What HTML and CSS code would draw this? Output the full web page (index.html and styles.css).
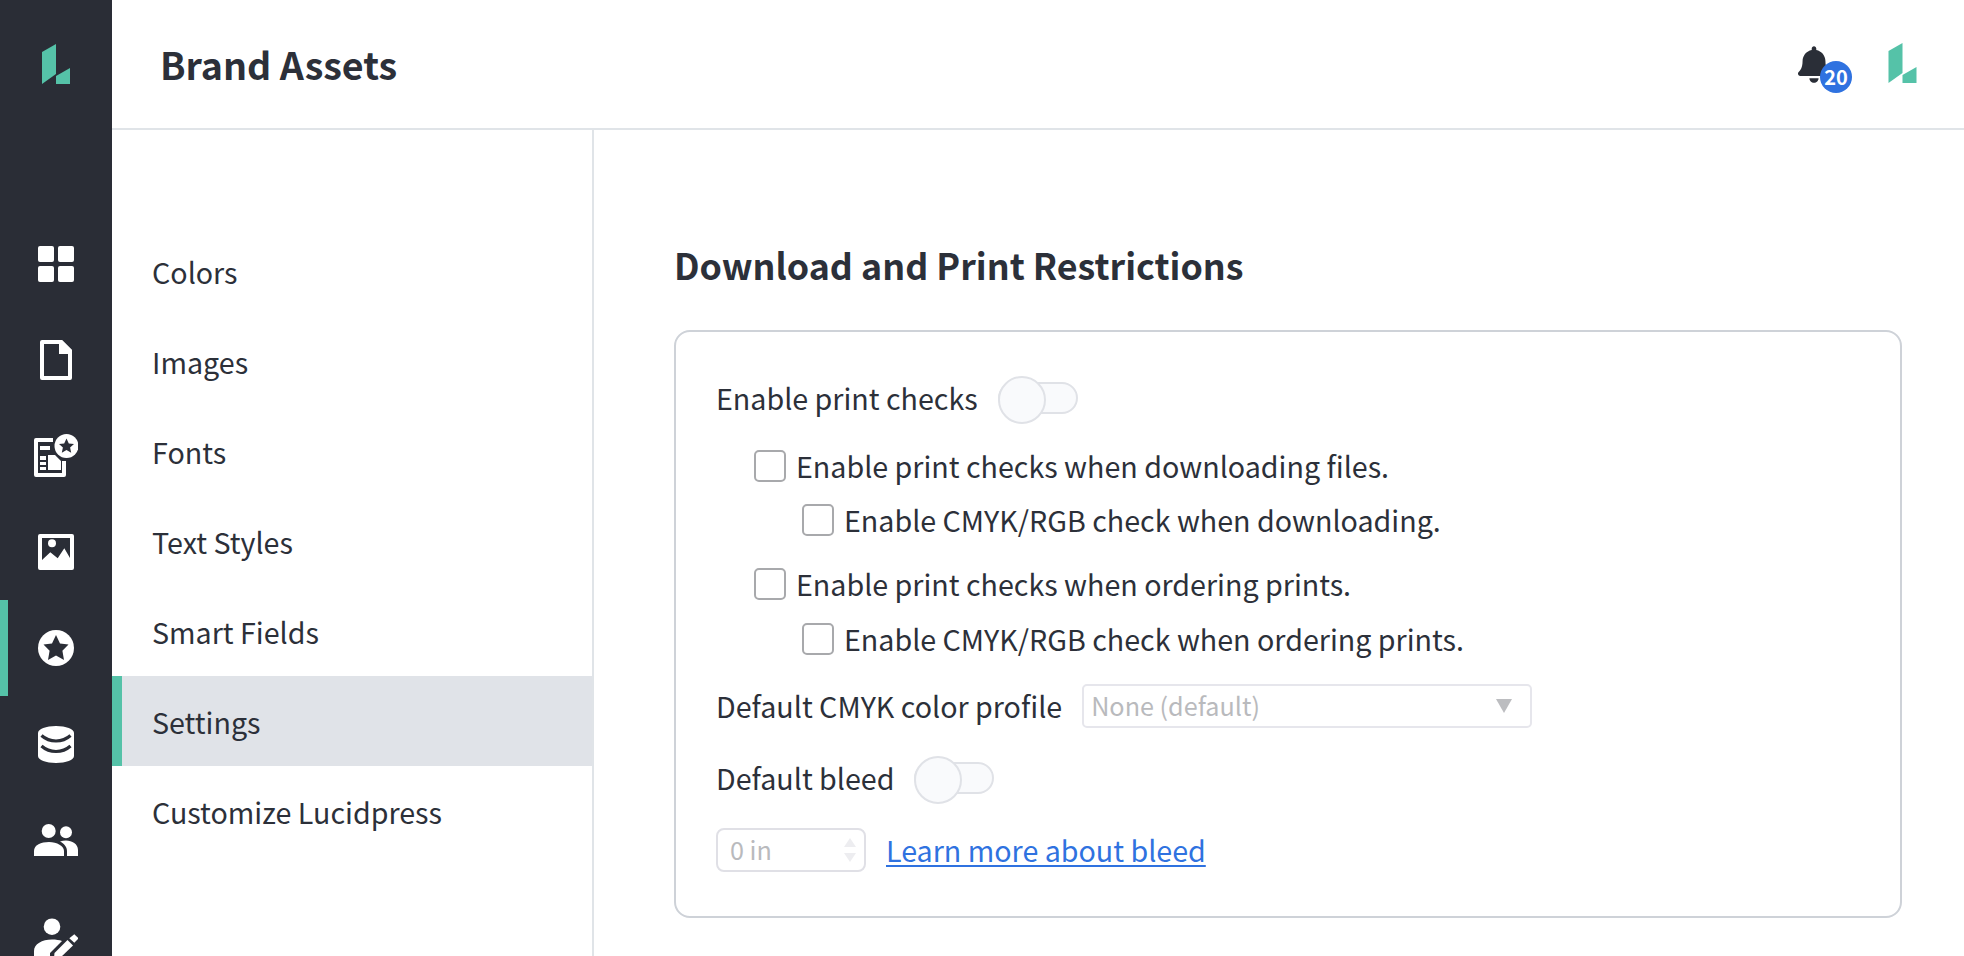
FILE: index.html
```html
<!DOCTYPE html>
<html lang="en">
<head>
<meta charset="utf-8">
<title>Brand Assets</title>
<link rel="stylesheet" href="styles.css">
</head>
<body>
<div class="app">
  <aside class="rail">
    <div class="rail-logo">
      <svg width="28" height="40" viewBox="0 0 28 40"><path class="logo" d="M0 8 14 0V30L0 40Z"/><path class="logo" d="M14 32 28 24V40H14Z"/></svg>
    </div>
    <nav class="rail-items">
      <div class="rail-item">
        <svg width="44" height="44" viewBox="0 0 44 44"><g class="w"><rect x="4" y="4" width="16" height="16" rx="2"/><rect x="24" y="4" width="16" height="16" rx="2"/><rect x="4" y="24" width="16" height="16" rx="2"/><rect x="24" y="24" width="16" height="16" rx="2"/></g></svg>
      </div>
      <div class="rail-item">
        <svg width="44" height="44" viewBox="0 0 44 44"><path class="wo" d="M8 4H27L36 13V40H8Z"/><path class="w" d="M25 2H28L38 12V16H25Z"/></svg>
      </div>
      <div class="rail-item">
        <svg width="44" height="44" viewBox="0 0 44 44"><path class="wo" d="M19 6H2V41H30V27"/><path class="w" d="M6 12H16V16H6ZM6 22H12V26H6ZM6 28H12V31H6ZM6 33H12V36H6ZM14 21H21L27 27V36H14Z"/><circle class="w" cx="32.500" cy="12" r="12"/><path class="d" d="M32.500 4.500 34.800 9.400 40 10 36.100 13.500 37.200 18.700 32.500 16 27.800 18.700 28.900 13.500 25 10 30.200 9.400Z"/></svg>
      </div>
      <div class="rail-item">
        <svg width="44" height="44" viewBox="0 0 44 44"><path class="w" fill-rule="evenodd" d="M6 4H38Q40 4 40 6V38Q40 40 38 40H6Q4 40 4 38V6Q4 4 6 4ZM8 8V30L16.300 22.300 23.700 28.300 30.300 18.300 36 28V8Z"/><circle class="w" cx="18" cy="13.300" r="4"/></svg>
      </div>
      <div class="rail-item active">
        <svg width="44" height="44" viewBox="0 0 44 44"><circle class="w" cx="22" cy="22" r="18"/><path class="d" d="M22 9 26 17.500 34.500 18.600 28.400 24.800 30 34 22 29.400 14 34 15.600 24.800 9.500 18.600 18 17.500Z"/></svg>
      </div>
      <div class="rail-item">
        <svg width="44" height="44" viewBox="0 0 44 44"><path class="w" d="M4 11C4 7 12 4 22 4S40 7 40 11V34C40 38 32 41 22 41S4 38 4 34Z"/><path class="dl" d="M7.500 13.500C12 17.500 17 19 22 19S32 17.500 36.500 13.500M7.500 24C12 28 17 29.500 22 29.500S32 28 36.500 24"/></svg>
      </div>
      <div class="rail-item">
        <svg width="44" height="44" viewBox="0 0 44 44"><g class="w"><circle cx="14.700" cy="13" r="7"/><circle cx="32" cy="14.300" r="6"/><path d="M0 38V33C0 27 7 24 15 24S30 28 30 33V38Z"/><path d="M26 23.500C28 23 30 22.600 32 22.600 38 22.600 44 26 44 32V38H33V33C33 29 30 25.500 26 23.500Z"/></g></svg>
      </div>
      <div class="rail-item">
        <svg width="44" height="44" viewBox="0 0 44 44"><g class="w"><circle cx="18" cy="12.700" r="8.300"/><path d="M0 44V37C0 30 8 25.500 18 25.500 22 25.500 25.500 26 28 27L16 39V44Z"/><path d="M33.500 26 39 31.500 26 44H20L20.500 39Z"/><path d="M35.300 24.300 40.300 20.300 44.700 24.300 40.300 28.700Z"/></g></svg>
      </div>
    </nav>
  </aside>
  <div class="main">
    <header class="topbar">
      <h1 class="title">Brand Assets</h1>
      <div class="top-actions">
        <div class="bell">
          <svg width="32" height="37" viewBox="0 0 448 512"><path class="dk" d="M224 512c35.320 0 63.970-28.650 63.970-64H160.030c0 35.350 28.650 64 63.970 64zm215.390-149.710c-19.320-20.760-55.470-51.990-55.470-154.290 0-77.700-54.480-139.900-127.940-155.160V32c0-17.670-14.320-32-31.980-32s-31.980 14.330-31.980 32v20.840C118.560 68.100 64.080 130.300 64.080 208c0 102.300-36.150 133.530-55.470 154.290-6 6.450-8.660 14.160-8.610 21.710.11 16.400 12.980 32 32.100 32h383.800c19.120 0 32-15.600 32.100-32 .05-7.550-2.610-15.270-8.610-21.710z"/></svg>
          <span class="badge">20</span>
        </div>
        <svg class="brand" width="29" height="40" viewBox="0 0 28 40"><path class="logo" d="M0 8 14 0V30L0 40Z"/><path class="logo" d="M14 32 28 24V40H14Z"/></svg>
      </div>
    </header>
    <div class="body">
      <nav class="subnav">
        <a class="sub-item">Colors</a>
        <a class="sub-item">Images</a>
        <a class="sub-item">Fonts</a>
        <a class="sub-item">Text Styles</a>
        <a class="sub-item">Smart Fields</a>
        <a class="sub-item current">Settings</a>
        <a class="sub-item">Customize Lucidpress</a>
      </nav>
      <section class="content">
        <h2 class="heading">Download and Print Restrictions</h2>
        <div class="card">
          <div class="row r-toggle">
            <span>Enable print checks</span>
            <span class="toggle"></span>
          </div>
          <label class="check lvl1 r1"><span class="box"></span>Enable print checks when downloading files.</label>
          <label class="check lvl2 r2"><span class="box"></span>Enable CMYK/RGB check when downloading.</label>
          <label class="check lvl1 r3"><span class="box"></span>Enable print checks when ordering prints.</label>
          <label class="check lvl2 r4"><span class="box"></span>Enable CMYK/RGB check when ordering prints.</label>
          <div class="row r-select">
            <span>Default CMYK color profile</span>
            <div class="select"><span>None (default)</span><i class="caret"></i></div>
          </div>
          <div class="row r-bleed">
            <span>Default bleed</span>
            <span class="toggle"></span>
          </div>
          <div class="row r-input">
            <div class="number"><span>0 in</span><span class="spin"><i class="up"></i><i class="down"></i></span></div>
            <a class="link">Learn more about bleed</a>
          </div>
        </div>
      </section>
    </div>
  </div>
</div>
</body>
</html>
```
FILE: styles.css
```css
* { box-sizing: border-box; }
html, body { margin: 0; height: 100%; overflow: hidden; }
body {
  font-family: "Noto Sans CJK SC", "Noto Sans", sans-serif;
  font-size: 28.65px;
  color: #2c3039;
  background: #fff;
}
.app { display: flex; height: 956px; }
.rail { width: 112px; flex: none; background: #2a2d36; overflow: hidden; }
.rail-logo { height: 216px; padding: 44px 0 0 42px; }
.rail-logo svg, .brand { display: block; }
.rail-items { display: flex; flex-direction: column; }
.rail-item { height: 96px; flex: none; display: flex; align-items: center; justify-content: center; border-left: 8px solid transparent; padding-right: 8px; }
.rail-item.active { border-left-color: #55c2a8; }
.w { fill: #fff; }
.wo { fill: none; stroke: #fff; stroke-width: 4; stroke-linejoin: round; }
.d { fill: #2a2d36; }
.dl { fill: none; stroke: #2a2d36; stroke-width: 3.2; }
.dk { fill: #2a2e37; }
.logo { fill: #55c2a8; }

.main { flex: 1; min-width: 0; display: flex; flex-direction: column; }
.topbar { height: 130px; flex: none; border-bottom: 2px solid #e0e4e8; display: flex; align-items: center; justify-content: space-between; padding: 0 47px 0 48px; }
.title { margin: 0; font-size: 37.6px; font-weight: 700; line-height: 1; }
.top-actions { display: flex; align-items: center; gap: 56px; }
.bell { position: relative; width: 34px; height: 37px; }
.bell svg { display: block; }
.badge { position: absolute; left: 22px; top: 15px; width: 32px; height: 32px; border-radius: 50%; background: #2f72e0; color: #fff; font-size: 20px; font-weight: 700; line-height: 32px; text-align: center; }
.brand { margin-top: -2px; filter: blur(0.6px); }

.body { flex: 1; display: flex; min-height: 0; }
.subnav { width: 482px; flex: none; border-right: 2px solid #e0e4e8; padding-top: 96px; display: flex; flex-direction: column; }
.sub-item { height: 90px; flex: none; display: flex; align-items: center; padding: 2px 0 0 40px; line-height: 1; }
.sub-item.current { background: #e0e3e8; border-left: 10px solid #55c2a8; padding-left: 30px; }
.content { flex: 1; padding: 111px 0 0 80px; min-width: 0; }
.heading { margin: 0 0 43px; font-size: 35.8px; font-weight: 700; line-height: 46px; height: 46px; }
.card { width: 1228px; height: 588px; border: 2px solid #ced2d8; border-radius: 16px; padding: 44px 0 0 40px; }
.row { display: flex; align-items: center; height: 44px; line-height: 1; }
.toggle { position: relative; display: block; width: 80px; height: 32px; border: 2px solid #e0e2e7; border-radius: 16px; background: #f9fafc; }
.toggle::before { content: ""; position: absolute; left: -2px; top: -8px; width: 44px; height: 44px; border: 2px solid #e0e2e7; border-radius: 50%; background: #f9fafc; }
.r-toggle .toggle { margin-left: 20px; }
.check { display: flex; align-items: center; height: 32px; line-height: 1; }
.box { width: 32px; height: 32px; flex: none; border: 2px solid #a8a9ac; border-radius: 5px; background: #fff; margin-right: 10px; }
.lvl1 { margin-left: 38px; }
.lvl2 { margin-left: 86px; }
.r1 { margin-top: 30px; }
.r2 { margin-top: 22px; }
.r3 { margin-top: 32px; }
.r4 { margin-top: 23px; }
.r-select { margin-top: 29px; }
.select { width: 450px; height: 44px; margin-left: 20px; border: 2px solid #e6e6ec; border-radius: 5px; display: flex; align-items: center; justify-content: space-between; padding: 0 18px 0 7px; font-size: 25.2px; color: #b9babd; }
.caret { width: 0; height: 0; border-left: 8.5px solid transparent; border-right: 8.5px solid transparent; border-top: 14px solid #bcbdc0; }
.r-bleed { margin-top: 28px; }
.r-bleed .toggle { margin-left: 20px; }
.r-input { margin-top: 28px; }
.number { width: 150px; height: 44px; border: 2px solid #e0e0e6; border-radius: 8px; display: flex; align-items: center; justify-content: space-between; padding: 0 8px 0 12px; font-size: 25.2px; color: #b9babd; }
.spin { display: flex; flex-direction: column; gap: 6px; }
.up { width: 0; height: 0; border-left: 6px solid transparent; border-right: 6px solid transparent; border-bottom: 9px solid #ededf0; }
.down { width: 0; height: 0; border-left: 6px solid transparent; border-right: 6px solid transparent; border-top: 9px solid #ededf0; }
.link { margin-left: 20px; color: #2f72e0; text-decoration: underline; text-underline-offset: 3px; }
```
